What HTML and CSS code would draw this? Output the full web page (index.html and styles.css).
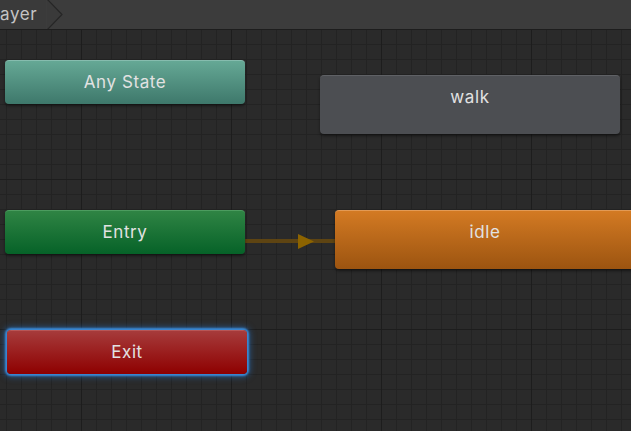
FILE: index.html
```html
<!DOCTYPE html>
<html>
<head>
<meta charset="utf-8">
<link rel="stylesheet" href="styles.css">
</head>
<body>
<div class="window">
  <div class="toolbar">
    <div class="crumb">
      <span class="crumb-text">ayer</span>
      <svg class="crumb-arrow" width="18" height="29" viewBox="0 0 18 29"><path d="M1 -1 L16 14.5 L1 30" fill="#3a3a3a" stroke="#262626" stroke-width="1.2"/></svg>
    </div>
  </div>
  <div class="canvas">
    <div class="transition">
      <svg class="tri" width="16" height="15" viewBox="0 0 16 15"><path d="M0 0 L16 7.5 L0 15 Z" fill="#8c6300"/></svg>
    </div>
    <div class="node any">Any State</div>
    <div class="node walk">walk</div>
    <div class="node entry">Entry</div>
    <div class="node idle">idle</div>
    <div class="node exit">Exit</div>
  </div>
</div>
</body>
</html>
```
FILE: styles.css
```css
* { box-sizing: border-box; }
html, body { margin: 0; padding: 0; }
body {
  width: 631px;
  height: 431px;
  overflow: hidden;
  background: #2a2a2a;
  font-family: Inter, "Noto Sans", sans-serif;
}
.window {
  display: flex;
  flex-direction: column;
  width: 631px;
  height: 431px;
}
.toolbar {
  height: 29px;
  flex: none;
  background: #3c3c3c;
  display: flex;
  align-items: stretch;
}
.crumb {
  display: flex;
  align-items: stretch;
  background: #3a3a3a;
}
.crumb-text {
  display: flex;
  align-items: center;
  width: 46px;
  white-space: nowrap;
  color: #c4c4c4;
  font-size: 17px;
  letter-spacing: 0.6px;
  padding-bottom: 1px;
}
.crumb-arrow { display: block; background: #3c3c3c; }
.canvas {
  position: relative;
  flex: 1;
  background-color: #2a2a2a;
  background-image:
    linear-gradient(to right, #1d1d1d 1px, transparent 1px),
    linear-gradient(to bottom, #1d1d1d 1px, transparent 1px),
    linear-gradient(to right, #232323 1px, transparent 1px),
    linear-gradient(to bottom, #232323 1px, transparent 1px);
  background-size: 150px 100%, 100% 150px, 15px 100%, 100% 15px;
  background-position: 81px 0, 0 0, 6px 0, 0 0;
}
.node {
  position: absolute;
  width: 240px;
  height: 44px;
  border-radius: 4px;
  text-align: center;
  line-height: 43px;
  font-size: 17px;
  color: #e2e2e2;
  letter-spacing: 0.6px;
  box-shadow: 0 2px 3px rgba(0,0,0,0.45);
}
.any {
  left: 5px; top: 31px;
  background: linear-gradient(to bottom, #65a895, #3e786b);
  border-top: 1px solid #86bcae;
}
.walk {
  left: 320px; top: 46px;
  width: 300px; height: 59px;
  background: #4c4e52;
  border-top: 1px solid #5f6165;
}
.entry {
  left: 5px; top: 181px;
  background: linear-gradient(to bottom, #2f8444, #066228);
  border-top: 1px solid #4c9c5f;
}
.idle {
  left: 335px; top: 181px;
  width: 300px; height: 59px;
  background: linear-gradient(to bottom, #d37a23, #9c5410);
  border-top: 1px solid #e29a55;
}
.exit {
  left: 7px; top: 301px;
  background: linear-gradient(to bottom, #a63b3b, #8e0000);
  border-top: 1px solid #b85656;
  box-shadow: 0 0 2px 2px #3a8ad6, 0 0 6px 3px rgba(40,120,210,0.5);
}
.transition {
  position: absolute;
  left: 245px; top: 210px;
  width: 90px; height: 4px;
  background: #5e4412;
}
.tri {
  position: absolute;
  left: 53px; top: -5px;
  display: block;
}
```
